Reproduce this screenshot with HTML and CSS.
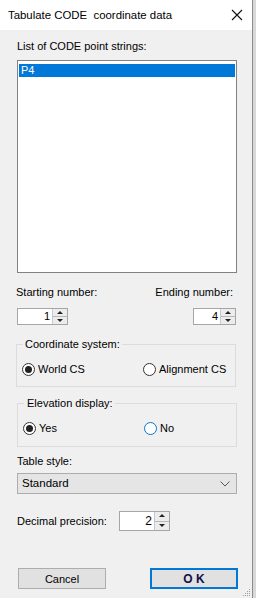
FILE: index.html
```html
<!DOCTYPE html>
<html>
<head>
<meta charset="utf-8">
<link rel="stylesheet" href="styles.css">
</head>
<body>
<div class="window">
  <div class="titlebar">
    <span class="title">Tabulate CODE&nbsp; coordinate data</span>
    <svg class="close" width="12" height="12" viewBox="0 0 12 12"><path d="M1 1 L11 11 M11 1 L1 11" stroke="#111" stroke-width="1.1" fill="none"/></svg>
  </div>
  <div class="content">
    <div class="label list-label">List of CODE point strings:</div>
    <div class="listbox">
      <div class="item selected">P4</div>
    </div>
    <div class="numbers-labels">
      <span>Starting number:</span>
      <span>Ending number:</span>
    </div>
    <div class="numbers-row">
      <div class="spinner sp-start">
        <span class="value">1</span>
        <span class="spin"><span class="up"></span><span class="down"></span></span>
      </div>
      <div class="spinner sp-end">
        <span class="value">4</span>
        <span class="spin"><span class="up"></span><span class="down"></span></span>
      </div>
    </div>
    <fieldset class="group g1">
      <legend>Coordinate system:</legend>
      <div class="radios">
        <label class="radio r-left"><span class="circle checked"></span>World CS</label>
        <label class="radio r-right"><span class="circle"></span>Alignment CS</label>
      </div>
    </fieldset>
    <fieldset class="group g2">
      <legend>Elevation display:</legend>
      <div class="radios">
        <label class="radio r-left"><span class="circle checked"></span>Yes</label>
        <label class="radio r-right"><span class="circle focus"></span>No</label>
      </div>
    </fieldset>
    <div class="label table-label">Table style:</div>
    <div class="dropdown">
      <span>Standard</span>
      <svg width="10" height="6" viewBox="0 0 10 6"><path d="M0.5 0.5 L5 5 L9.5 0.5" stroke="#555" stroke-width="1" fill="none"/></svg>
    </div>
    <div class="decimal-row">
      <span class="label">Decimal precision:</span>
      <div class="spinner sp-dec">
        <span class="value">2</span>
        <span class="spin"><span class="up"></span><span class="down"></span></span>
      </div>
    </div>
    <div class="buttons">
      <button class="btn cancel">Cancel</button>
      <button class="btn ok">O K</button>
    </div>
  </div>
  <svg class="grip" width="8" height="8" viewBox="0 0 8 8">
    <rect x="6" y="0" width="1" height="1" fill="#a0a0a0"/>
    <rect x="4" y="2" width="1" height="1" fill="#a0a0a0"/>
    <rect x="6" y="2" width="1" height="1" fill="#a0a0a0"/>
    <rect x="2" y="4" width="1" height="1" fill="#a0a0a0"/>
    <rect x="4" y="4" width="1" height="1" fill="#a0a0a0"/>
    <rect x="6" y="4" width="1" height="1" fill="#a0a0a0"/>
    <rect x="0" y="6" width="1" height="1" fill="#a0a0a0"/>
    <rect x="2" y="6" width="1" height="1" fill="#a0a0a0"/>
    <rect x="4" y="6" width="1" height="1" fill="#a0a0a0"/>
    <rect x="6" y="6" width="1" height="1" fill="#a0a0a0"/>
  </svg>
</div>
</body>
</html>
```
FILE: styles.css
```css
html, body {
  margin: 0;
  padding: 0;
  background: #d8d8d8;
}
body {
  width: 256px;
  height: 598px;
  overflow: hidden;
  font-family: "Liberation Sans", Arial, sans-serif;
  font-size: 11px;
  line-height: 13px;
  color: #000;
}
.window {
  position: relative;
  width: 252px;
  height: 598px;
  background: #f0f0f0;
  border-right: 1px solid #8c8c8c;
}
.titlebar {
  height: 30px;
  background: #fff;
  display: flex;
  align-items: center;
  justify-content: space-between;
  padding-left: 8px;
  padding-right: 9px;
  box-sizing: border-box;
}
.title {
  font-size: 11.4px;
  color: #000;
}
.close {
  display: block;
}
.content {
  padding: 0 0 0 17px;
  display: flex;
  flex-direction: column;
}
.list-label {
  margin-top: 10px;
}
.listbox {
  margin-top: 7px;
  width: 220px;
  height: 213px;
  box-sizing: border-box;
  border: 1px solid #828282;
  background: #fff;
  padding: 3px 1px 0 1px;
}
.item {
  height: 13px;
  line-height: 13px;
  padding-left: 2px;
}
.item.selected {
  background: #0078d7;
  color: #fff;
}
.numbers-labels {
  margin-top: 13px;
  width: 217px;
  display: flex;
  justify-content: space-between;
  margin-left: -1px;
}
.numbers-row {
  margin-top: 9px;
  width: 219px;
  display: flex;
  justify-content: space-between;
}
.spinner {
  height: 17px;
  box-sizing: border-box;
  border: 1px solid #a6a6a6;
  background: #fff;
  display: flex;
  align-items: stretch;
}
.sp-start { width: 51px; }
.sp-end { width: 43px; }
.sp-dec { width: 51px; height: 20px; }
.spinner .value {
  flex: 1;
  text-align: right;
  padding-right: 2px;
  line-height: 15px;
}
.sp-dec .value { line-height: 18px; font-size: 12px; }
.spin {
  width: 14px;
  display: flex;
  flex-direction: column;
  border-left: 1px solid #c8c8c8;
}
.spin .up, .spin .down {
  flex: 1;
  background: #ececec;
  position: relative;
}
.spin .up {
  border-bottom: 1px solid #b8b8b8;
}
.spin .up::after, .spin .down::after {
  content: "";
  position: absolute;
  left: 4px;
  width: 0;
  height: 0;
  border-left: 3px solid transparent;
  border-right: 3px solid transparent;
}
.spin .up::after {
  top: 2px;
  border-bottom: 3px solid #222;
}
.spin .down::after {
  top: 2px;
  border-top: 3px solid #222;
}
.group {
  margin: 13px 0 0 -1px;
  padding: 0 0 0 6px;
  width: 220px;
  box-sizing: border-box;
  border: 1px solid #dcdcdc;
  min-width: 0;
}
.group legend {
  padding: 0 2px;
  line-height: 13px;
}
.g1 { height: 49px; }
.g2 { margin-left: 0; margin-top: 10px; height: 50px; padding-left: 6px; }
.g2 legend { padding-left: 3px; }
.radios {
  display: flex;
  margin-top: 12px;
}
.radio {
  display: flex;
  align-items: center;
  gap: 3px;
}
.r-left { width: 121px; margin-left: -1px; }
.circle {
  width: 13px;
  height: 13px;
  box-sizing: border-box;
  border: 1px solid #333;
  border-radius: 50%;
  background: #fff;
  position: relative;
}
.circle.checked::after {
  content: "";
  position: absolute;
  left: 2px;
  top: 2px;
  width: 7px;
  height: 7px;
  border-radius: 50%;
  background: #222;
}
.circle.focus {
  border-color: #0078d7;
}
.table-label {
  margin-top: 8px;
}
.dropdown {
  margin-top: 5px;
  width: 220px;
  height: 21px;
  box-sizing: border-box;
  border: 1px solid #adadad;
  background: #e5e5e5;
  display: flex;
  align-items: center;
  justify-content: space-between;
  padding: 0 6px 0 4px;
  font-size: 11.5px;
}
.dropdown svg { display: block; }
.decimal-row {
  margin-top: 17px;
  display: flex;
  align-items: center;
  gap: 0;
}
.decimal-row .label {
  width: 102px;
}
.buttons {
  margin-top: 37px;
  width: 220px;
  display: flex;
  justify-content: space-between;
  margin-left: 1px;
}
.btn {
  font-family: "Liberation Sans", Arial, sans-serif;
  font-size: 11px;
  height: 21px;
  width: 88px;
  box-sizing: border-box;
  background: #e1e1e1;
  border: 1px solid #adadad;
  padding: 0;
  margin: 0;
  color: #000;
}
.ok {
  border: 2px solid #0078d7;
  font-weight: bold;
  font-size: 12px;
  color: #10104a;
}
.grip {
  position: absolute;
  right: 1px;
  bottom: 1px;
}
```
